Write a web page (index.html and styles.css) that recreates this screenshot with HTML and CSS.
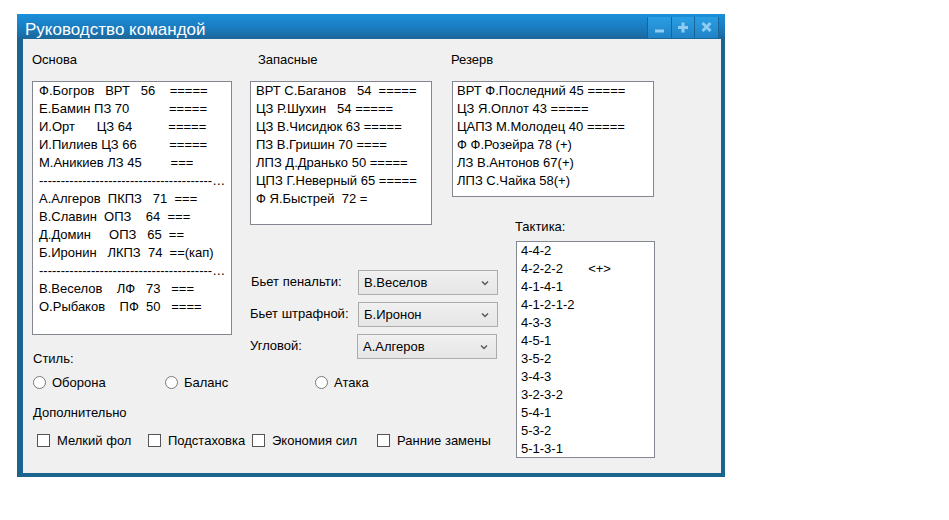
FILE: index.html
```html
<!DOCTYPE html>
<html lang="ru">
<head>
<meta charset="utf-8">
<title>Руководство командой</title>
<link rel="stylesheet" href="styles.css">
</head>
<body>
<div class="window">
  <div class="titlebar">
    <span class="title">Руководство командой</span>
    <div class="tb-buttons">
      <div class="tb-btn">
        <svg width="23" height="21" viewBox="0 0 23 21"><rect x="7" y="12.5" width="9" height="3" fill="#8ecdf2"/></svg>
      </div>
      <div class="tb-btn">
        <svg width="22" height="21" viewBox="0 0 22 21"><rect x="6" y="9" width="10" height="3" fill="#8ecdf2"/><rect x="9.5" y="5.5" width="3" height="10" fill="#8ecdf2"/></svg>
      </div>
      <div class="tb-btn">
        <svg width="23" height="21" viewBox="0 0 23 21"><path d="M7.5 6 L15.5 14 M15.5 6 L7.5 14" stroke="#8ecdf2" stroke-width="3" fill="none"/></svg>
      </div>
    </div>
  </div>
  <div class="client">
    <div class="col-osnova">
      <div class="caption">Основа</div>
      <div class="listbox lb-osnova">
        <div class="row">Ф.Богров   ВРТ   56    =====</div>
        <div class="row">Е.Бамин ПЗ 70           =====</div>
        <div class="row">И.Орт      ЦЗ 64          =====</div>
        <div class="row">И.Пилиев ЦЗ 66         =====</div>
        <div class="row">М.Аникиев ЛЗ 45        ===</div>
        <div class="row sep">------------------------------------------------------------------</div>
        <div class="row">А.Алгеров  ПКПЗ   71  ===</div>
        <div class="row">В.Славин  ОПЗ    64  ===</div>
        <div class="row">Д.Домин     ОПЗ   65  ==</div>
        <div class="row">Б.Иронин   ЛКПЗ  74  ==(кап)</div>
        <div class="row sep">------------------------------------------------------------------</div>
        <div class="row">В.Веселов    ЛФ   73   ===</div>
        <div class="row">О.Рыбаков    ПФ  50   ====</div>
      </div>
      <div class="caption style-cap">Стиль:</div>
    </div>

    <div class="col-zapas">
      <div class="caption zapas-cap">Запасные</div>
      <div class="listbox lb-zapas">
        <div class="row">ВРТ С.Баганов   54  =====</div>
        <div class="row">ЦЗ Р.Шухин   54 =====</div>
        <div class="row">ЦЗ В.Чисидюк 63 =====</div>
        <div class="row">ПЗ В.Гришин 70 ====</div>
        <div class="row">ЛПЗ Д.Дранько 50 =====</div>
        <div class="row">ЦПЗ Г.Неверный 65 =====</div>
        <div class="row">Ф Я.Быстрей  72 =</div>
      </div>
    </div>

    <div class="col-rezerv">
      <div class="caption">Резерв</div>
      <div class="listbox lb-rezerv">
        <div class="row">ВРТ Ф.Последний 45 =====</div>
        <div class="row">ЦЗ Я.Оплот 43 =====</div>
        <div class="row">ЦАПЗ М.Молодец 40 =====</div>
        <div class="row">Ф Ф.Розейра 78 (+)</div>
        <div class="row">ЛЗ В.Антонов 67(+)</div>
        <div class="row">ЛПЗ С.Чайка 58(+)</div>
      </div>
    </div>

    <div class="setpieces">
      <label class="sp-label sp-first">Бьет пенальти:</label>
      <div class="combo"><span>В.Веселов</span><svg width="8" height="6" viewBox="0 0 8 6"><polyline points="1,1.5 4,4.5 7,1.5" fill="none" stroke="#5a5a5a" stroke-width="1.5"/></svg></div>
      <label class="sp-label">Бьет штрафной:</label>
      <div class="combo"><span>Б.Иронон</span><svg width="8" height="6" viewBox="0 0 8 6"><polyline points="1,1.5 4,4.5 7,1.5" fill="none" stroke="#5a5a5a" stroke-width="1.5"/></svg></div>
      <label class="sp-label">Угловой:</label>
      <div class="combo combo-last"><span>А.Алгеров</span><svg width="8" height="6" viewBox="0 0 8 6"><polyline points="1,1.5 4,4.5 7,1.5" fill="none" stroke="#5a5a5a" stroke-width="1.5"/></svg></div>
    </div>

    <div class="col-tactics">
      <div class="caption">Тактика:</div>
      <div class="listbox lb-tactics">
        <div class="row">4-4-2</div>
        <div class="row">4-2-2-2       &lt;+&gt;</div>
        <div class="row">4-1-4-1</div>
        <div class="row">4-1-2-1-2</div>
        <div class="row">4-3-3</div>
        <div class="row">4-5-1</div>
        <div class="row">3-5-2</div>
        <div class="row">3-4-3</div>
        <div class="row">3-2-3-2</div>
        <div class="row">5-4-1</div>
        <div class="row">5-3-2</div>
        <div class="row">5-1-3-1</div>
      </div>
    </div>

    <div class="extras">
      <div class="radios">
        <div class="opt opt-r1"><span class="radio"></span>Оборона</div>
        <div class="opt opt-r2"><span class="radio"></span>Баланс</div>
        <div class="opt"><span class="radio"></span>Атака</div>
      </div>
      <div class="caption extra-cap">Дополнительно</div>
      <div class="checks">
        <div class="opt opt-c1"><span class="check"></span>Мелкий фол</div>
        <div class="opt opt-c2"><span class="check"></span>Подстаховка</div>
        <div class="opt opt-c3"><span class="check"></span>Экономия сил</div>
        <div class="opt"><span class="check"></span>Ранние замены</div>
      </div>
    </div>
  </div>
</div>
</body>
</html>
```

FILE: styles.css
```css
* { box-sizing: border-box; }

html, body {
  margin: 0;
  padding: 0;
  background: #ffffff;
}

body {
  font-family: "Liberation Sans", Arial, sans-serif;
  font-size: 13px;
  color: #000;
}

.window {
  margin: 14px 0 0 17px;
  width: 708px;
  height: 463px;
  display: flex;
  flex-direction: column;
}

.titlebar {
  height: 25px;
  flex: none;
  display: flex;
  justify-content: space-between;
  align-items: flex-start;
  padding: 0 6px 0 8px;
  background: linear-gradient(#1a90da 0%, #1a7cc0 55%, #1b6699 100%);
}

.title {
  color: #ffffff;
  font-size: 17px;
  line-height: 21px;
  margin-top: 5px;
}

.tb-buttons {
  display: flex;
  margin-top: 3px;
  border-right: 1px solid #1b6496;
}

.tb-btn {
  height: 21px;
  display: flex;
  border-left: 1px solid #1b6496;
  background: linear-gradient(#2a9ee4, #2183c6);
}

.tb-btn svg { display: block; }

.client {
  flex: 1;
  background: #f0f0f0;
  border-left: 6px solid #1b6490;
  border-right: 4px solid #1b6490;
  border-bottom: 4px solid #1b6490;
  padding: 13px 0 0 9px;
  display: grid;
  grid-template-columns: 218px 201px 64px 140px;
  grid-template-rows: 167px 45px 102px 1fr;
}

.caption {
  line-height: 15px;
  height: 15px;
  white-space: nowrap;
}

.listbox {
  background: #ffffff;
  border: 1px solid #828790;
  overflow: hidden;
}

.row {
  line-height: 18px;
  height: 18px;
  white-space: pre;
}

.sep {
  overflow: hidden;
  text-overflow: ellipsis;
}

/* Основа */
.col-osnova {
  grid-column: 1;
  grid-row: 1 / 4;
  display: flex;
  flex-direction: column;
}

.lb-osnova {
  margin-top: 14px;
  width: 200px;
  height: 255px;
  padding: 0 2px 0 6px;
}

.style-cap {
  margin-top: 16px;
  margin-left: 1px;
}

/* Запасные */
.col-zapas {
  grid-column: 2;
  grid-row: 1 / 3;
  display: flex;
  flex-direction: column;
}

.zapas-cap { margin-left: 8px; }

.lb-zapas {
  margin-top: 14px;
  width: 182px;
  height: 144px;
  padding: 0 0 0 5px;
}

/* Резерв */
.col-rezerv {
  grid-column: 3 / 5;
  grid-row: 1;
  display: flex;
  flex-direction: column;
}

.lb-rezerv {
  margin-top: 14px;
  margin-left: 1px;
  width: 202px;
  height: 116px;
  padding: 0 0 0 4px;
}

/* Тактика */
.col-tactics {
  grid-column: 4;
  grid-row: 2 / 5;
  display: flex;
  flex-direction: column;
  padding-top: 0;
}

.lb-tactics {
  margin-top: 7px;
  margin-left: 1px;
  width: 139px;
  height: 217px;
  padding: 0 0 0 4px;
}

/* Стандарты */
.setpieces {
  grid-column: 2 / 4;
  grid-row: 3;
  padding-top: 6px;
  display: grid;
  grid-template-columns: 108px 140px;
  grid-auto-rows: 25px;
  row-gap: 7px;
  align-items: center;
}

.sp-label {
  white-space: nowrap;
  line-height: 15px;
  margin-top: -2px;
}

.sp-first {
  margin-left: 1px;
}

.combo {
  height: 25px;
  border: 1px solid #acacac;
  background: linear-gradient(#f0f0f0, #e6e6e6);
  display: flex;
  align-items: center;
  justify-content: space-between;
  padding: 0 8px 0 5px;
}

.combo span { line-height: 15px; }
.combo svg { display: block; }

.combo-last { margin-left: -1px; margin-right: 1px; }

/* Нижняя часть */
.extras {
  grid-column: 1 / 4;
  grid-row: 4;
  display: flex;
  flex-direction: column;
  padding-top: 9px;
}

.radios,
.checks {
  display: flex;
  align-items: center;
  height: 15px;
}

.radios { padding-left: 1px; }
.checks { padding-left: 5px; margin-top: 13px; }

.opt {
  display: flex;
  align-items: center;
  white-space: nowrap;
  line-height: 15px;
}

.opt-r1 { width: 132px; }
.opt-r2 { width: 150px; }

.opt-c1 { width: 111px; }
.opt-c2 { width: 104px; }
.opt-c3 { width: 125px; }

.radio {
  width: 13px;
  height: 13px;
  border-radius: 50%;
  border: 1px solid #7a7a7a;
  background: #ffffff;
  margin-right: 6px;
  flex: none;
}

.check {
  width: 13px;
  height: 13px;
  border: 1px solid #555555;
  background: #ffffff;
  margin-right: 7px;
  flex: none;
}

.extra-cap {
  margin-top: 15px;
  margin-left: 1px;
}
```
